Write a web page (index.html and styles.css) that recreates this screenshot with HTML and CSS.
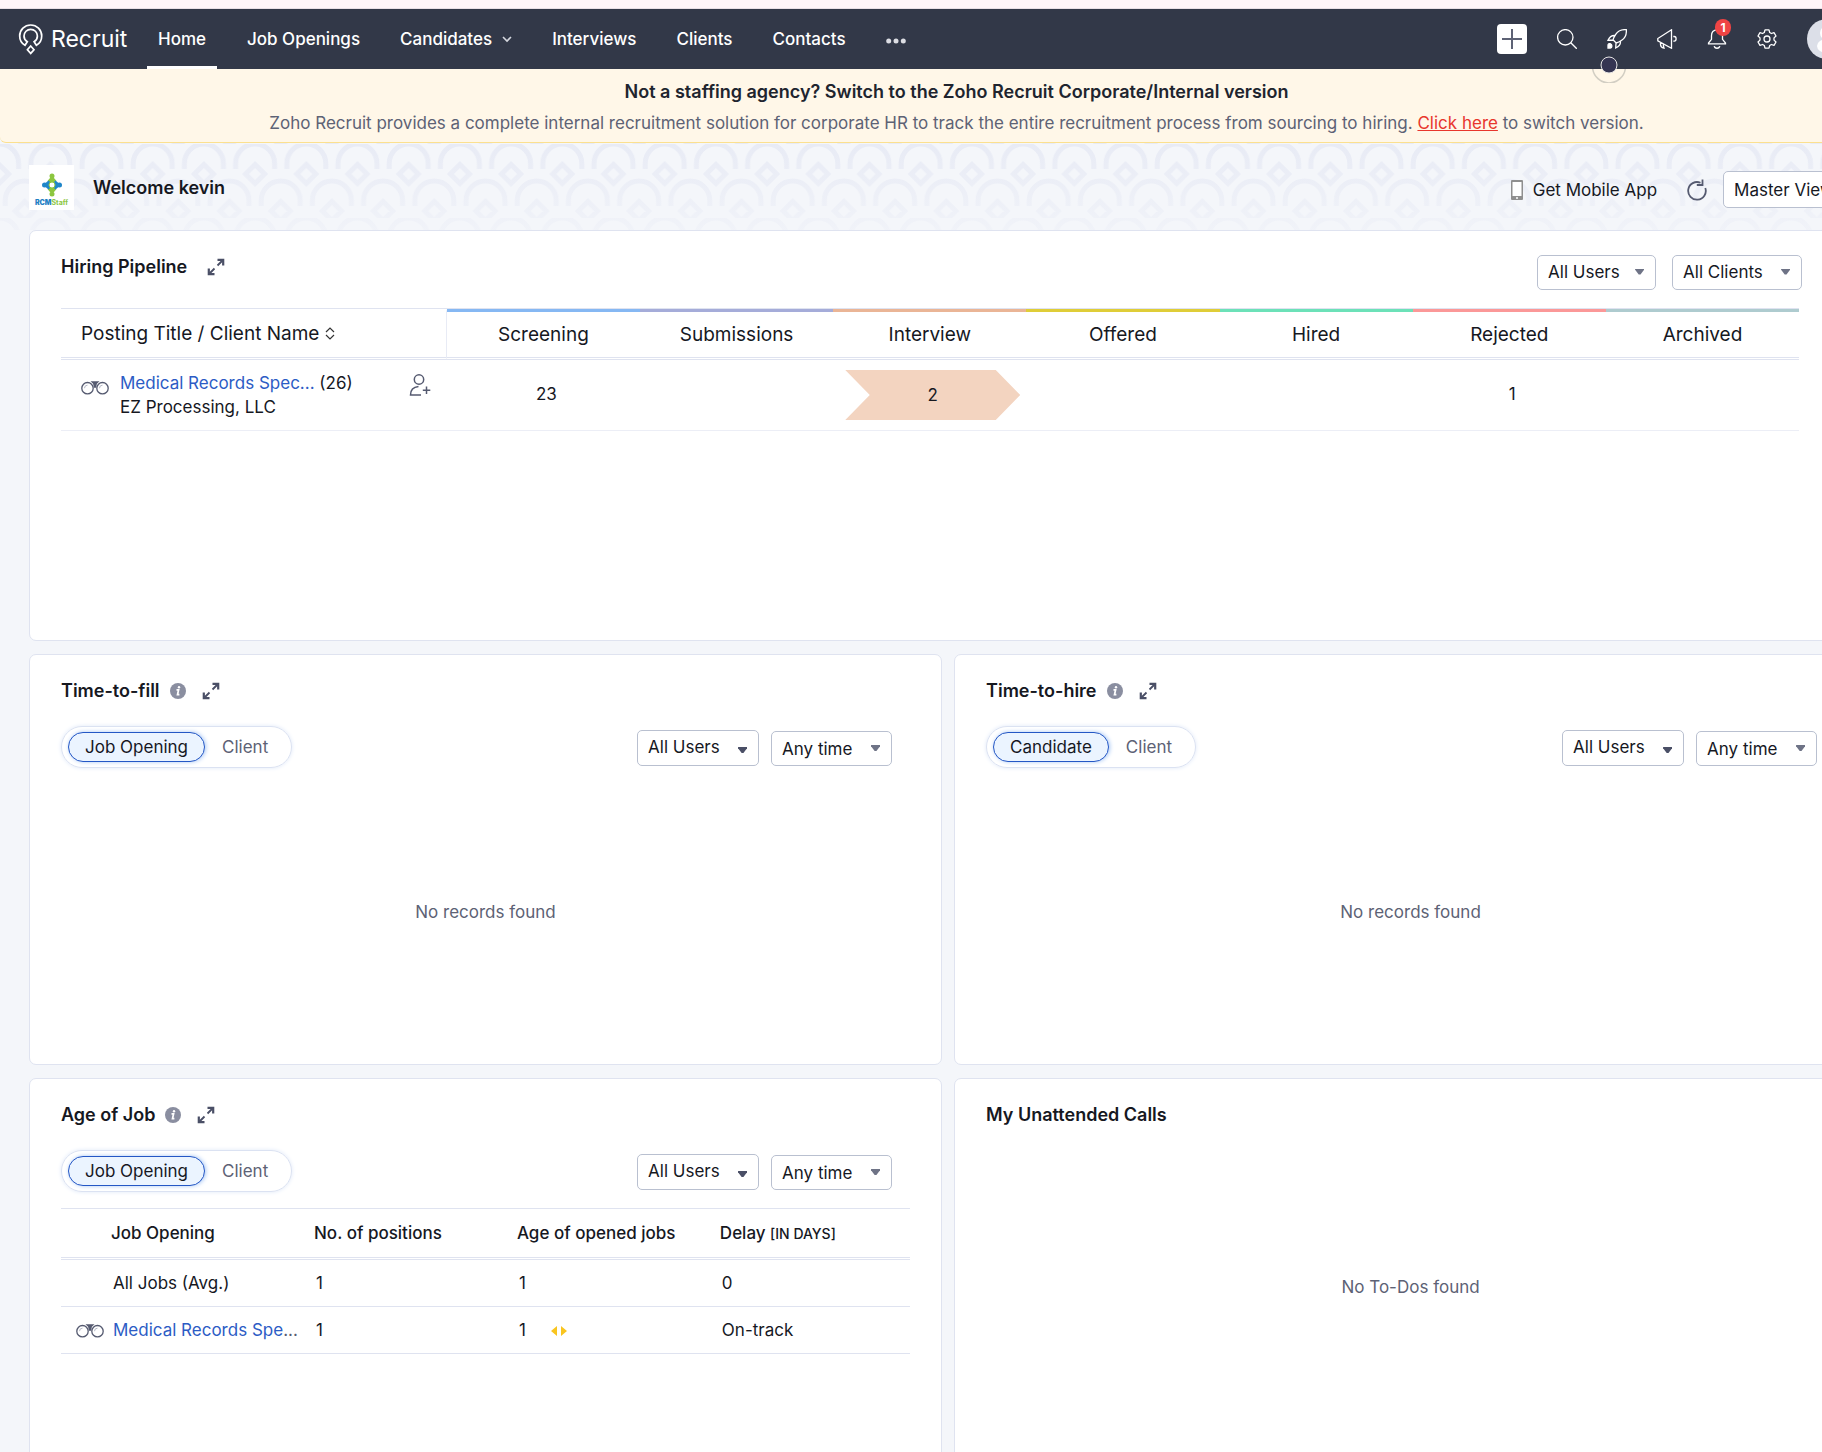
FILE: index.html
```html
<!DOCTYPE html>
<html lang="en">
<head>
<meta charset="utf-8">
<title>Zoho Recruit - Home</title>
<link rel="stylesheet" href="styles.css">
</head>
<body>
<svg class="sprite" aria-hidden="true">
  <symbol id="expand" viewBox="0 0 18 18"><path d="M10.5 7.5 16 2M7.500 10.500 2 16" fill="none" stroke="currentColor" stroke-width="1.800"/><path d="M10.500 1.800H16.200V7.500M1.800 10.500V16.200H7.500" fill="none" stroke="currentColor" stroke-width="2.200"/></symbol>
  <symbol id="info" viewBox="0 0 16 16"><circle cx="8" cy="8" r="8" fill="currentColor"/><path d="M6.500 6.800H8.600L7.500 11.700H9.400" fill="none" stroke="#fff" stroke-width="1.700"/><circle cx="9" cy="4.200" r="1.200" fill="#fff"/></symbol>
  <symbol id="binoculars" viewBox="0 0 28 16"><g fill="none" stroke="currentColor" stroke-width="1.300"><circle cx="6.500" cy="9.200" r="5.700"/><circle cx="21.500" cy="9.200" r="5.700"/></g><path d="M3.500 9.200a3 3 0 0 1 3-3M18.500 9.200a3 3 0 0 1 3-3" fill="none" stroke="#b5b8c6"/><path d="M9.500 2.300h9l-2.600 2.500-.9 4h-2l-.9-4z" fill="currentColor"/></symbol>
</svg>
<div class="viewport">
<div class="page">
  <div class="strip"></div>
  <header class="topbar">
    <a class="brand" href="#">
      <svg width="26" height="32" viewBox="0 0 26 32" fill="none" stroke="#fff" stroke-width="1.700"><path d="M7 22.300C3.500 20.300 1.700 17 1.700 13a11 11 0 0 1 22 0c0 4-1.800 7.300-5.300 9.300l-2.300-3.500c2-1.300 3.300-3.300 3.300-5.800a6.700 6.700 0 0 0-13.400 0c0 2.500 1.300 4.500 3.300 5.800z"/><path d="M12.700 23l3.300 3.700-3.300 3.700-3.300-3.700z"/></svg>
      <span>Recruit</span>
    </a>
    <nav class="nav">
      <a class="active" href="#">Home</a>
      <a href="#">Job Openings</a>
      <a href="#">Candidates <svg width="10" height="7" viewBox="0 0 10 7"><path d="M1 1l4 4 4-4" fill="none" stroke="#d5d7de" stroke-width="1.600"/></svg></a>
      <a href="#">Interviews</a>
      <a href="#">Clients</a>
      <a href="#">Contacts</a>
      <a class="more" href="#" aria-label="More"><svg width="20" height="6" viewBox="0 0 20 6" fill="#dcdde3"><circle cx="2.700" cy="3" r="2.500"/><circle cx="10" cy="3" r="2.500"/><circle cx="17.300" cy="3" r="2.500"/></svg></a>
    </nav>
    <div class="tools">
      <button class="add" aria-label="Create"><svg width="20" height="20" viewBox="0 0 20 20"><path class="plus" d="M10 0v20M0 10h20"/></svg></button>
      <button aria-label="Search"><svg width="20" height="20" viewBox="0 0 20 20"><circle cx="8.300" cy="8.300" r="7.700"/><path d="M13.800 13.800l6 6"/></svg></button>
      <button aria-label="What's new"><svg width="20" height="20" viewBox="0 0 20 20"><path d="M19.300.7c-4.500-.4-8.300 1.100-10.600 4.600C7.200 7.600 6.400 9.300 6 10.800L9.200 14c1.500-.4 3.200-1.200 5.500-2.700 3.500-2.300 5-6.100 4.600-10.600zM7.800 6.500C5 6.300 2.500 8 1 11.300L6 11M13.500 12.200c.2 2.800-1.500 5.300-4.800 6.800L9 14"/><path d="M1 19v-2.800c0-1.400 1.300-1.900 2.200-1.500 1 .4 1.700 1.300 1.700 2.300S4 19 3.400 19z" fill="#fff"/></svg></button>
      <button aria-label="Announcements"><svg width="20" height="20" viewBox="0 0 20 20"><path d="M14.500.8v18.400L.8 11.800V9.500zM3.500 13.300v2.200c0 2 1 3 3.500 3.700l-.8-3.700M16.300 7.500h1c2.400 0 2.400 4.700 0 4.700h-1"/></svg></button>
      <button class="bell" aria-label="Notifications"><svg width="20" height="20" viewBox="0 0 20 20"><path d="M10 .8c-4 0-5.500 3-5.500 6v3.500L1.500 14v.8h17V14l-3-3.700V6.800c0-3-1.500-6-5.500-6zM7.200 17.200c.5 2.700 5.100 2.700 5.600 0"/></svg><span class="badge">1</span></button>
      <button aria-label="Setup"><svg width="20" height="20" viewBox="0 0 20 20"><circle cx="10" cy="10" r="3"/><path d="M8 .8h4l.7 2.700 1.700 1 2.600-.9 2 3.400-2 1.900v2.200l2 1.900-2 3.400-2.600-.9-1.700 1-.7 2.700H8l-.7-2.700-1.700-1-2.600.9-2-3.400 2-1.900V8.900L1 7l2-3.400 2.600.9 1.700-1z" stroke-linejoin="round"/></svg></button>
      <button class="avatar" aria-label="Profile"><svg width="40" height="40" viewBox="0 0 40 40"><circle cx="20" cy="20" r="20" fill="#dcdfe8" stroke="none"/><circle cx="20" cy="14" r="7" fill="#fff" stroke="none"/><ellipse cx="20" cy="27" rx="10" ry="7" fill="#fff" stroke="none"/></svg></button>
    </div>
    <svg class="beacon" width="36" height="36" viewBox="0 0 36 36"><path d="M1.700 22a16.500 16.500 0 0 0 32.600 0" fill="none" stroke="#d2cec3" stroke-width="1.600"/><circle cx="18" cy="18" r="8" fill="#353552" stroke="#e6e5e5"/></svg>
  </header>

  <section class="notice">
    <h2>Not a staffing agency? Switch to the Zoho Recruit Corporate/Internal version</h2>
    <p>Zoho Recruit provides a complete internal recruitment solution for corporate HR to track the entire recruitment process from sourcing to hiring. <a href="#">Click here</a> to switch version.</p>
  </section>

  <section class="hero">
    <svg class="scales" width="100%" height="100%" aria-hidden="true">
      <defs>
        <pattern id="scale" width="51.200" height="74" patternUnits="userSpaceOnUse" x="24.700" y="1">
          <g fill="none" stroke="#e8ebf5" stroke-width="5"><path d="M6.100 25v-5.500a19.500 19.500 0 0 1 39 0V25M25.600 20.500l9.500 9.500-9.500 9.500-9.500-9.500z"/><path d="M-19.500 62v-5.500a19.500 19.500 0 0 1 39 0V62M31.700 62v-5.500a19.500 19.500 0 0 1 39 0V62M0 57.500l9.500 9.500L0 76.500-9.500 67zM51.200 57.500l9.500 9.500-9.500 9.500-9.500-9.500z"/></g>
        </pattern>
        <linearGradient id="fade" x2="0" y2="1"><stop offset="0" stop-color="#f4f6fa" stop-opacity="0"/><stop offset="1" stop-color="#f4f6fa" stop-opacity=".7"/></linearGradient>
      </defs>
      <rect width="100%" height="100%" fill="url(#scale)"/>
      <rect width="100%" height="100%" fill="url(#fade)"/>
    </svg>
    <div class="company">
      <svg width="20" height="24" viewBox="0 0 20 24"><g fill="#8cc63f"><circle cx="10" cy="3" r="2.500"/><path d="M5.500 8L8 5h4l2.500 3-2 1.500h-5z"/><circle cx="10" cy="21" r="2.500"/><path d="M5.500 16L8 19h4l2.500-3-2-1.500h-5z"/></g><g fill="#1f86c9"><circle cx="2.500" cy="12" r="2.500"/><path d="M6.500 7.500L3.500 10v4l3 2.500 2-2v-5z"/><circle cx="17.500" cy="12" r="2.500"/><path d="M13.500 7.500l3 2.500v4l-3 2.500-2-2v-5z"/></g><circle cx="10" cy="12" r="3" fill="#fff" stroke="#8cc63f"/></svg>
      <span><b>RCM</b>Staff</span>
    </div>
    <h1>Welcome kevin</h1>
    <div class="hero-tools">
      <a class="mobile" href="#"><svg width="12" height="20" viewBox="0 0 12 20"><rect width="12" height="20" rx="1" fill="#8f8f8f"/><rect x="1.500" y="2" width="9" height="14" fill="#fff"/><circle cx="6" cy="18" r="1" fill="#fff"/></svg>Get Mobile App</a>
      <button class="refresh" aria-label="Refresh"><svg width="20" height="22" viewBox="0 0 20 22" fill="none" stroke="#555a70" stroke-width="1.800"><path d="M13.500 3.800A8.800 8.800 0 1 0 18.300 9"/><path d="M15.500.5V6H9.800"/></svg></button>
      <span class="select view"><select aria-label="View"><option>Master View</option></select></span>
    </div>
  </section>

  <main class="board">
    <section class="card pipeline">
      <div class="card-head">
        <h2>Hiring Pipeline</h2>
        <button class="grow" aria-label="Expand"><svg width="18" height="18"><use href="#expand"/></svg></button>
        <div class="filters">
          <span class="select users"><select aria-label="Users"><option>All Users</option></select></span>
          <span class="select clients"><select aria-label="Clients"><option>All Clients</option></select></span>
        </div>
      </div>
      <table class="stages">
        <thead>
          <tr>
            <th class="posting">Posting Title / Client Name <svg width="10" height="13" viewBox="0 0 10 13" fill="none" stroke="#333" stroke-width="1.200"><path d="M1 5l4-4 4 4M1 8l4 4 4-4"/></svg></th>
            <th class="s-blue">Screening</th><th class="s-violet">Submissions</th><th class="s-orange">Interview</th><th class="s-yellow">Offered</th><th class="s-green">Hired</th><th class="s-red">Rejected</th><th class="s-teal">Archived</th>
          </tr>
        </thead>
        <tbody>
          <tr>
            <td class="posting">
              <div class="job">
                <svg class="bino" width="28" height="16"><use href="#binoculars"/></svg>
                <div class="job-text"><div><a href="#">Medical Records Spec...</a> (26)</div><div>EZ Processing, LLC</div></div>
                <svg class="assign" width="22" height="22" viewBox="0 0 22 22" fill="none" stroke="#555a70" stroke-width="1.500"><circle cx="10" cy="5.500" r="4.700"/><path d="M12 21H1.500c0-5 3-8 8-8.500M17.500 12.500v7.500M13.800 16.300h7.500"/></svg>
              </div>
            </td>
            <td>23</td><td></td><td><span class="arrow">2</span></td><td></td><td></td><td>1</td><td></td>
          </tr>
        </tbody>
      </table>
    </section>

    <section class="card">
      <div class="card-head">
        <h2>Time-to-fill</h2>
        <svg class="info" width="16" height="16"><use href="#info"/></svg>
        <button class="grow" aria-label="Expand"><svg width="18" height="18"><use href="#expand"/></svg></button>
      </div>
      <div class="controls">
        <div class="toggle"><button class="on">Job Opening</button><button>Client</button></div>
        <div class="filters">
          <span class="select owner"><select aria-label="Users"><option>All Users</option></select></span>
          <span class="select period"><select aria-label="Period"><option>Any time</option></select></span>
        </div>
      </div>
      <p class="empty">No records found</p>
    </section>

    <section class="card">
      <div class="card-head">
        <h2>Time-to-hire</h2>
        <svg class="info" width="16" height="16"><use href="#info"/></svg>
        <button class="grow" aria-label="Expand"><svg width="18" height="18"><use href="#expand"/></svg></button>
      </div>
      <div class="controls">
        <div class="toggle"><button class="on">Candidate</button><button>Client</button></div>
        <div class="filters">
          <span class="select owner"><select aria-label="Users"><option>All Users</option></select></span>
          <span class="select period"><select aria-label="Period"><option>Any time</option></select></span>
        </div>
      </div>
      <p class="empty">No records found</p>
    </section>

    <section class="card">
      <div class="card-head">
        <h2>Age of Job</h2>
        <svg class="info" width="16" height="16"><use href="#info"/></svg>
        <button class="grow" aria-label="Expand"><svg width="18" height="18"><use href="#expand"/></svg></button>
      </div>
      <div class="controls">
        <div class="toggle"><button class="on">Job Opening</button><button>Client</button></div>
        <div class="filters">
          <span class="select owner"><select aria-label="Users"><option>All Users</option></select></span>
          <span class="select period"><select aria-label="Period"><option>Any time</option></select></span>
        </div>
      </div>
      <table class="ages">
        <colgroup><col class="c-name"><col class="c-count"><col class="c-count"><col></colgroup>
        <thead><tr><th class="name">Job Opening</th><th>No. of positions</th><th>Age of opened jobs</th><th>Delay <small>[IN DAYS]</small></th></tr></thead>
        <tbody>
          <tr><td class="name">All Jobs (Avg.)</td><td>1</td><td>1</td><td>0</td></tr>
          <tr><td class="name linked"><div><svg width="28" height="16"><use href="#binoculars"/></svg><span><a href="#">Medical Records Spe</a>...</span></div></td><td>1</td><td>1<svg class="steady" width="16" height="10" viewBox="0 0 16 10" fill="#f9c51f"><path d="M6 0v10L0 5zM10 0v10l6-5z"/></svg></td><td>On-track</td></tr>
        </tbody>
      </table>
    </section>

    <section class="card">
      <div class="card-head"><h2>My Unattended Calls</h2></div>
      <p class="empty todos">No To-Dos found</p>
    </section>
  </main>
</div>
</div>
</body>
</html>
```
FILE: styles.css
```css
* { box-sizing: border-box; }
body { margin: 0; font-family: Inter, "Liberation Sans", sans-serif; font-size: 17px; line-height: 24px; color: #16181f; background: #f4f6fa; }
h1, h2, p { margin: 0; }
a { color: inherit; text-decoration: none; }
button { font: inherit; color: inherit; background: none; border: 0; padding: 0; cursor: pointer; }
svg { display: block; flex: none; }
.sprite { position: absolute; width: 0; height: 0; }
.viewport { height: 100vh; overflow: hidden; }
/* the dashboard runs on past the right edge of the window */
.page { width: 105%; }

.strip { height: 9px; background: #fff5f9; border-bottom: 1px solid #e9dfe6; }
.topbar { position: relative; display: flex; height: 60px; padding: 0 66px 0 18px; background: #323848; color: #fff; }
.brand { display: flex; align-items: center; gap: 7px; width: 129px; font-size: 23px; }
.nav { display: flex; gap: 20px; font-weight: 500; }
.nav a { display: flex; align-items: center; gap: 10px; padding: 0 10px; border: solid transparent; border-width: 3px 0; }
.nav .active { padding: 0 11px; border-bottom-color: #fff; }
.nav .more { padding-top: 4px; }
.tools { display: flex; align-items: center; gap: 30px; margin-left: auto; }
.tools svg { fill: none; stroke: #fff; stroke-width: 1.300; }
.tools .plus { stroke: #5d6275; stroke-width: 2; }
.add { display: grid; place-items: center; width: 30px; height: 30px; border-radius: 4px; background: #fff; }
.bell { position: relative; }
.badge { position: absolute; left: 8px; top: -10px; width: 16px; height: 17px; border-radius: 8px; background: #ef4444; font-size: 12px; line-height: 17px; font-weight: 700; text-align: center; }
.beacon { position: absolute; right: 286px; bottom: -14px; }

.notice { height: 74px; padding-top: 10px; text-align: center; background: #fff7e8; border-bottom: 1px solid #fbe08f; border-radius: 0 0 6px 6px; }
.notice h2 { font-size: 18px; line-height: 26px; font-weight: 600; color: #20242e; }
.notice p { line-height: 36px; color: #5d6275; }
.notice a { color: #e8362d; text-decoration: underline; }

.hero { position: relative; display: flex; align-items: center; height: 87px; padding: 2px 47px 0 29px; }
.scales { position: absolute; inset: 0; }
.hero > :not(.scales) { position: relative; }
.company { display: flex; flex-direction: column; align-items: center; gap: 2px; width: 45px; height: 45px; padding-top: 8px; background: #fff; font-size: 7px; line-height: 8px; font-weight: 700; color: #8cc63f; }
.company b { color: #1f7fc4; }
.hero h1 { margin-left: 19px; font-size: 18px; font-weight: 600; }
.hero-tools { display: flex; align-items: center; margin-left: auto; padding-top: 4px; }
.mobile { display: flex; align-items: center; gap: 10px; }
.refresh { margin: 0 16px 0 30px; }

.select { position: relative; display: block; height: 35px; }
.select select { width: 100%; height: 100%; padding: 0 10px; font: inherit; color: inherit; appearance: none; background: #fff; border: 1px solid #b9c0d0; border-radius: 5px; }
.select::after { content: ""; position: absolute; right: 12px; top: 14px; width: 9px; height: 6px; background: #6e7386; clip-path: polygon(0 0, 100% 0, 100% 20%, 60% 100%, 40% 100%, 0 20%); pointer-events: none; }
.view { width: 143px; height: 37px; }
.users { width: 119px; }
.clients { width: 130px; }
.owner { width: 122px; height: 36px; }
.owner select { padding-bottom: 2px; }
.owner::after { top: 17px; background: #4a4f66; }
.period { width: 121px; }

.board { display: grid; grid-template-columns: 1fr 1fr; gap: 13px 12px; padding: 0 46px 0 29px; }
.card { display: flex; flex-direction: column; height: 411px; padding: 24px 31px 0; background: #fff; border: 1px solid #dfe3f0; border-radius: 7px; }
.pipeline { grid-column: 1 / -1; padding-right: 67px; }
.card-head { display: flex; align-items: center; height: 24px; }
.card-head h2 { font-size: 18px; font-weight: 600; }
.info { margin-left: 10px; color: #8a8ea0; }
.grow { margin-left: 16px; color: #4a4f66; }
.pipeline .grow { margin-left: 20px; }
.filters { display: flex; align-items: flex-end; gap: 12px; margin-left: auto; }
.pipeline .filters { gap: 16px; margin-right: -3px; padding-top: 10px; }
.controls { display: flex; align-items: center; margin-top: 23px; padding-right: 18px; }
.controls .filters { padding-top: 2px; }
.toggle { display: flex; gap: 17px; padding: 5px 23px 5px 6px; border: 1px solid #dbe2f2; border-radius: 21px; box-shadow: 0 0 4px #dfe8f8; color: #5d6275; }
.toggle .on { height: 30px; padding: 0 16px; border: 1px solid #2457c5; border-radius: 15px; background: #ebf4ff; color: #16181f; box-shadow: 1px 0 4px #a9c8f5; }
.empty { margin: 132px auto 0; color: #5d6275; }
.todos { margin-top: 148px; }

table { width: 100%; border-collapse: separate; border-spacing: 0; table-layout: fixed; }
td a { color: #2c5cc5; }
th { font-weight: 400; }
.stages { margin-top: 29px; border-top: 1px solid #dfe3f0; }
.stages th { height: 51px; padding: 0; font-size: 19px; border-top: 3px solid; border-bottom: 3px double #dfe3f0; }
.stages th.posting { width: 22.200%; padding: 0 0 2px 20px; text-align: left; border-top-color: transparent; border-right: 1px solid #e8ebf5; }
.posting svg { display: inline-block; }
.stages td { height: 71px; padding: 0 0 2px 6px; text-align: center; border-bottom: 1px solid #eceef6; }
.stages td.posting { padding: 0 16px 0 20px; text-align: left; }
.stages .s-blue { border-top-color: #86b8f3; }
.stages .s-violet { border-top-color: #a5acd9; }
.stages .s-orange { border-top-color: #eab596; }
.stages .s-yellow { border-top-color: #dfcd38; }
.stages .s-green { border-top-color: #6ce1b8; }
.stages .s-red { border-top-color: #fb9898; }
.stages .s-teal { border-top-color: #aecbcf; }
.job { display: flex; gap: 11px; }
.bino { margin-top: 8px; color: #555a70; }
.assign { margin: 3px 0 0 auto; }
.arrow { display: block; width: 175px; margin: 2px auto 0; line-height: 50px; background: #f3d4c0; clip-path: polygon(0 0, 86% 0, 100% 50%, 86% 100%, 0 100%, 14% 50%); }

.ages { margin-top: 16px; border-top: 1px solid #dfe3f0; }
.c-name { width: 29.800%; }
.c-count { width: 23.900%; }
.ages th { height: 51px; padding: 0; font-weight: 500; text-align: left; border-bottom: 3px double #dfe3f0; }
.ages td { height: 47px; padding: 0 0 0 2px; border-bottom: 1px solid #dfe3f0; }
.ages .name { padding-left: 50px; }
.ages td.name { padding-left: 52px; }
.ages td.linked { padding-left: 15px; }
.linked div { display: flex; align-items: center; gap: 9px; color: #555a70; white-space: nowrap; }
.ages small { font-size: 14px; }
.steady { display: inline-block; margin-left: 25px; }
```
